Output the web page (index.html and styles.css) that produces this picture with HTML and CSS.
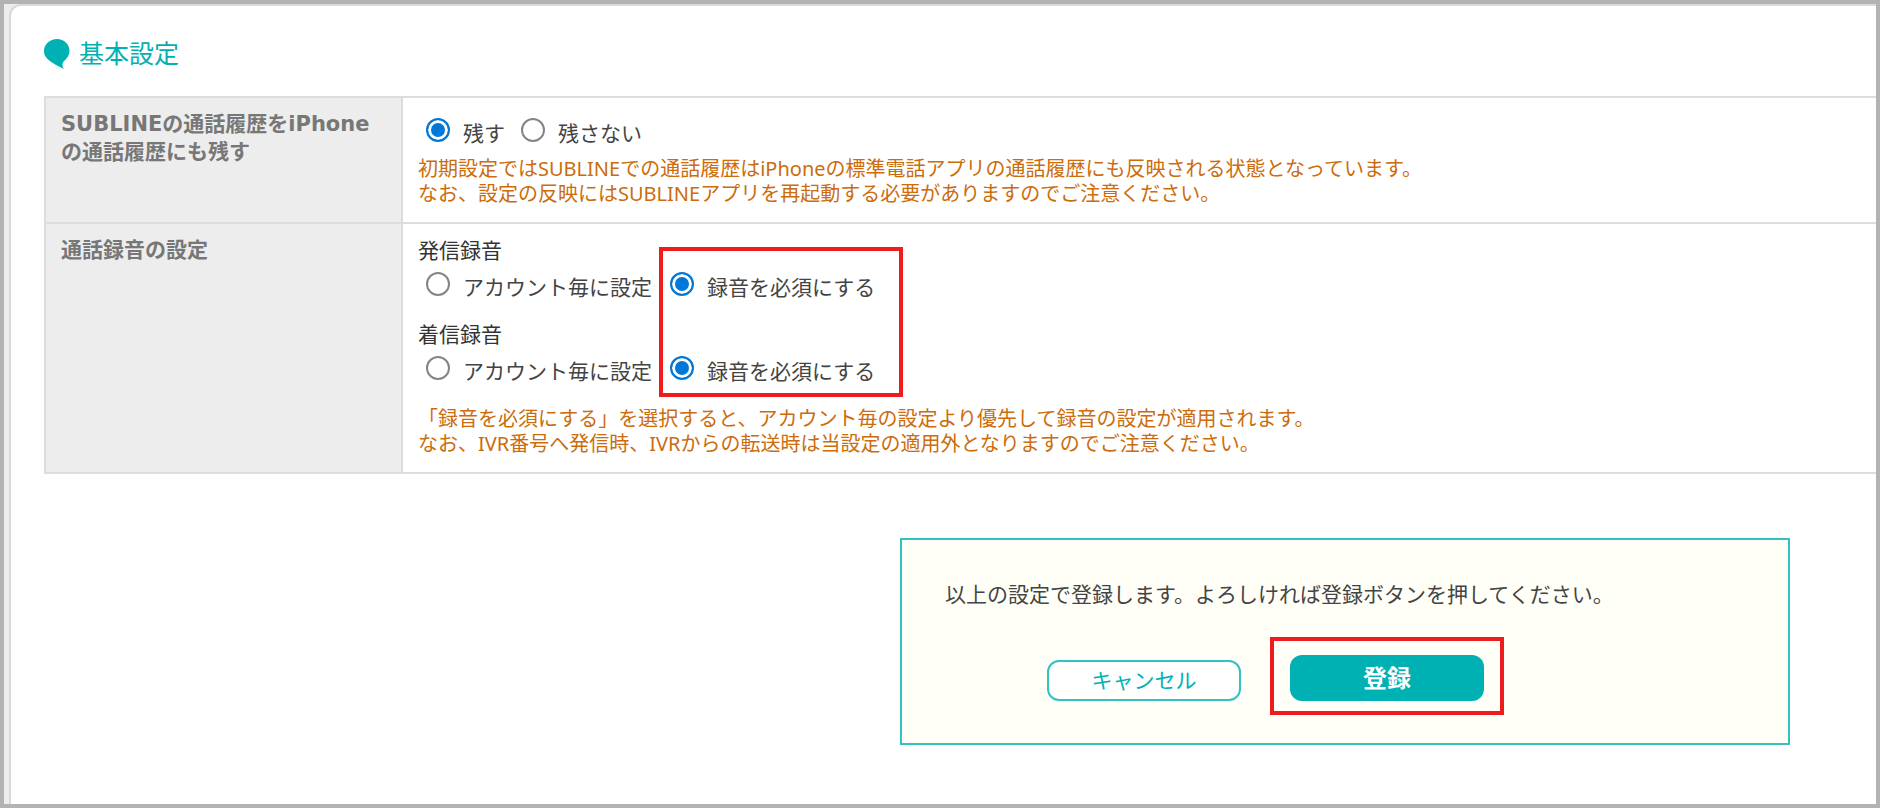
FILE: index.html
```html
<!DOCTYPE html>
<html lang="ja">
<head>
  <meta charset="UTF-8">
  <title>基本設定</title>
  <link rel="stylesheet" href="styles.css">
</head>
<body>
  <main class="panel">
    <h1 class="title">
      <svg class="title-icon" width="26" height="31" viewBox="0 0 26 31" aria-hidden="true">
        <path d="M13 0C20 0 25.500 5 25.500 12C25.500 16 23 19.500 19.500 22.500C18 24.500 18 27.500 20 30C15 27.500 7 23.500 3.500 20C1 17.500 0 15 0 12C0 5 6 0 13 0Z" fill="#00b1b3"/>
      </svg>
      基本設定
    </h1>

    <form>
      <table class="settings">
        <tr>
          <th scope="row">SUBLINEの通話履歴をiPhone<br>の通話履歴にも残す</th>
          <td>
            <div class="radios">
              <label><input type="radio" name="history" checked>残す</label>
              <label><input type="radio" name="history">残さない</label>
            </div>
            <p class="note">初期設定ではSUBLINEでの通話履歴はiPhoneの標準電話アプリの通話履歴にも反映される状態となっています。<br>なお、設定の反映にはSUBLINEアプリを再起動する必要がありますのでご注意ください。</p>
          </td>
        </tr>
        <tr>
          <th scope="row">通話録音の設定</th>
          <td>
            <div class="recording">
              <fieldset>
                <legend>発信録音</legend>
                <div class="radios radios-grid">
                  <label><input type="radio" name="outgoing">アカウント毎に設定</label>
                  <label><input type="radio" name="outgoing" checked>録音を必須にする</label>
                </div>
              </fieldset>
              <fieldset>
                <legend>着信録音</legend>
                <div class="radios radios-grid">
                  <label><input type="radio" name="incoming">アカウント毎に設定</label>
                  <label><input type="radio" name="incoming" checked>録音を必須にする</label>
                </div>
              </fieldset>
              <span class="mark mark-radios"></span>
            </div>
            <p class="note">「録音を必須にする」を選択すると、アカウント毎の設定より優先して録音の設定が適用されます。<br>なお、IVR番号へ発信時、IVRからの転送時は当設定の適用外となりますのでご注意ください。</p>
          </td>
        </tr>
      </table>

      <div class="confirm">
        <p>以上の設定で登録します。よろしければ登録ボタンを押してください。</p>
        <div class="buttons">
          <button type="button" class="btn btn-cancel">キャンセル</button>
          <div class="submit">
            <button type="submit" class="btn btn-submit">登録</button>
            <span class="mark mark-submit"></span>
          </div>
        </div>
      </div>
    </form>
  </main>
</body>
</html>
```
FILE: styles.css
```css
* {
  box-sizing: border-box;
}

html {
  background-color: #fff;
}

body {
  display: flex;
  min-height: calc(100vh - 1px);
  margin: 0;
  padding-left: 5px;
  border: 4px solid #b3b3b3;
  background-color: #ededed;
  color: #444;
  font-family: "Noto Sans", "Noto Sans CJK JP", sans-serif;
  font-size: 21px;
  line-height: 28px;
}

p {
  margin: 0;
}

.panel {
  flex: 1;
  padding: 33px 0 33px 33px;
  border: 2px solid #d9d9d9;
  border-width: 2px 0 0 2px;
  border-top-left-radius: 12px;
  background-color: #fff;
}

.title {
  display: flex;
  gap: 9px;
  margin: 0 0 26px;
  color: #00b1b3;
  font-size: 25px;
  font-weight: normal;
}

/* settings table */
.settings {
  width: 100%;
  border-collapse: collapse;
}

.settings th,
.settings td {
  padding: 12px 15px 16px;
  border: 2px solid #ddd;
  border-right: none;
  text-align: left;
  vertical-align: top;
}

.settings th {
  width: 357px;
  background-color: #ededed;
  color: #777;
  font-family: "DejaVu Sans", "Noto Sans CJK JP", sans-serif;
  white-space: nowrap;
}

.note {
  color: #cc6c0c;
  font-size: 20px;
  line-height: 25px;
}

.radios {
  display: flex;
  gap: 16px;
  line-height: 46px;
}

.radios-grid {
  display: grid;
  grid-template-columns: 236px auto;
  justify-content: start;
}

.radios label {
  display: flex;
  white-space: nowrap;
}

.radios input {
  flex-shrink: 0;
  appearance: none;
  width: 24px;
  height: 24px;
  margin: 8px 13px 0 8px;
  border: 2px solid #858585;
  border-radius: 50%;
  background-color: #fff;
}

.radios label + label input {
  margin-left: 0;
}

.radios input:checked {
  border-color: #0078d7;
  background-color: #0078d7;
  box-shadow: inset 0 0 0 3px #fff;
}

.recording {
  position: relative;
  margin-bottom: 12px;
}

.recording fieldset {
  margin: 0;
  padding: 0;
  border: none;
}

.recording fieldset + fieldset {
  margin-top: 10px;
}

.recording legend {
  padding: 0;
  color: #333;
}

/* red frames */
.mark {
  position: absolute;
  border: 4px solid #ee1c1c;
  pointer-events: none;
}

.mark-radios {
  top: 11px;
  left: 241px;
  width: 244px;
  height: 150px;
}

.mark-submit {
  inset: -18px -20px -14px;
}

/* confirm box */
.confirm {
  width: 890px;
  margin: 64px 86px 0 auto;
  padding: 40px 43px 42px;
  border: 2px solid #33c1c2;
  background-color: #fffff7;
}

.buttons {
  display: flex;
  align-items: flex-end;
  gap: 49px;
  margin: 47px 0 0 102px;
}

.submit {
  position: relative;
}

.btn {
  display: block;
  width: 194px;
  padding: 0 0 4px;
  border-radius: 12px;
  font-family: inherit;
  cursor: pointer;
}

.btn-cancel {
  height: 41px;
  border: 2px solid #33c1c2;
  background-color: #fff;
  color: #00b1b3;
  font-size: 21px;
}

.btn-submit {
  height: 46px;
  border: none;
  background-color: #00b1b3;
  color: #fff;
  font-size: 24px;
  font-weight: bold;
}
```
